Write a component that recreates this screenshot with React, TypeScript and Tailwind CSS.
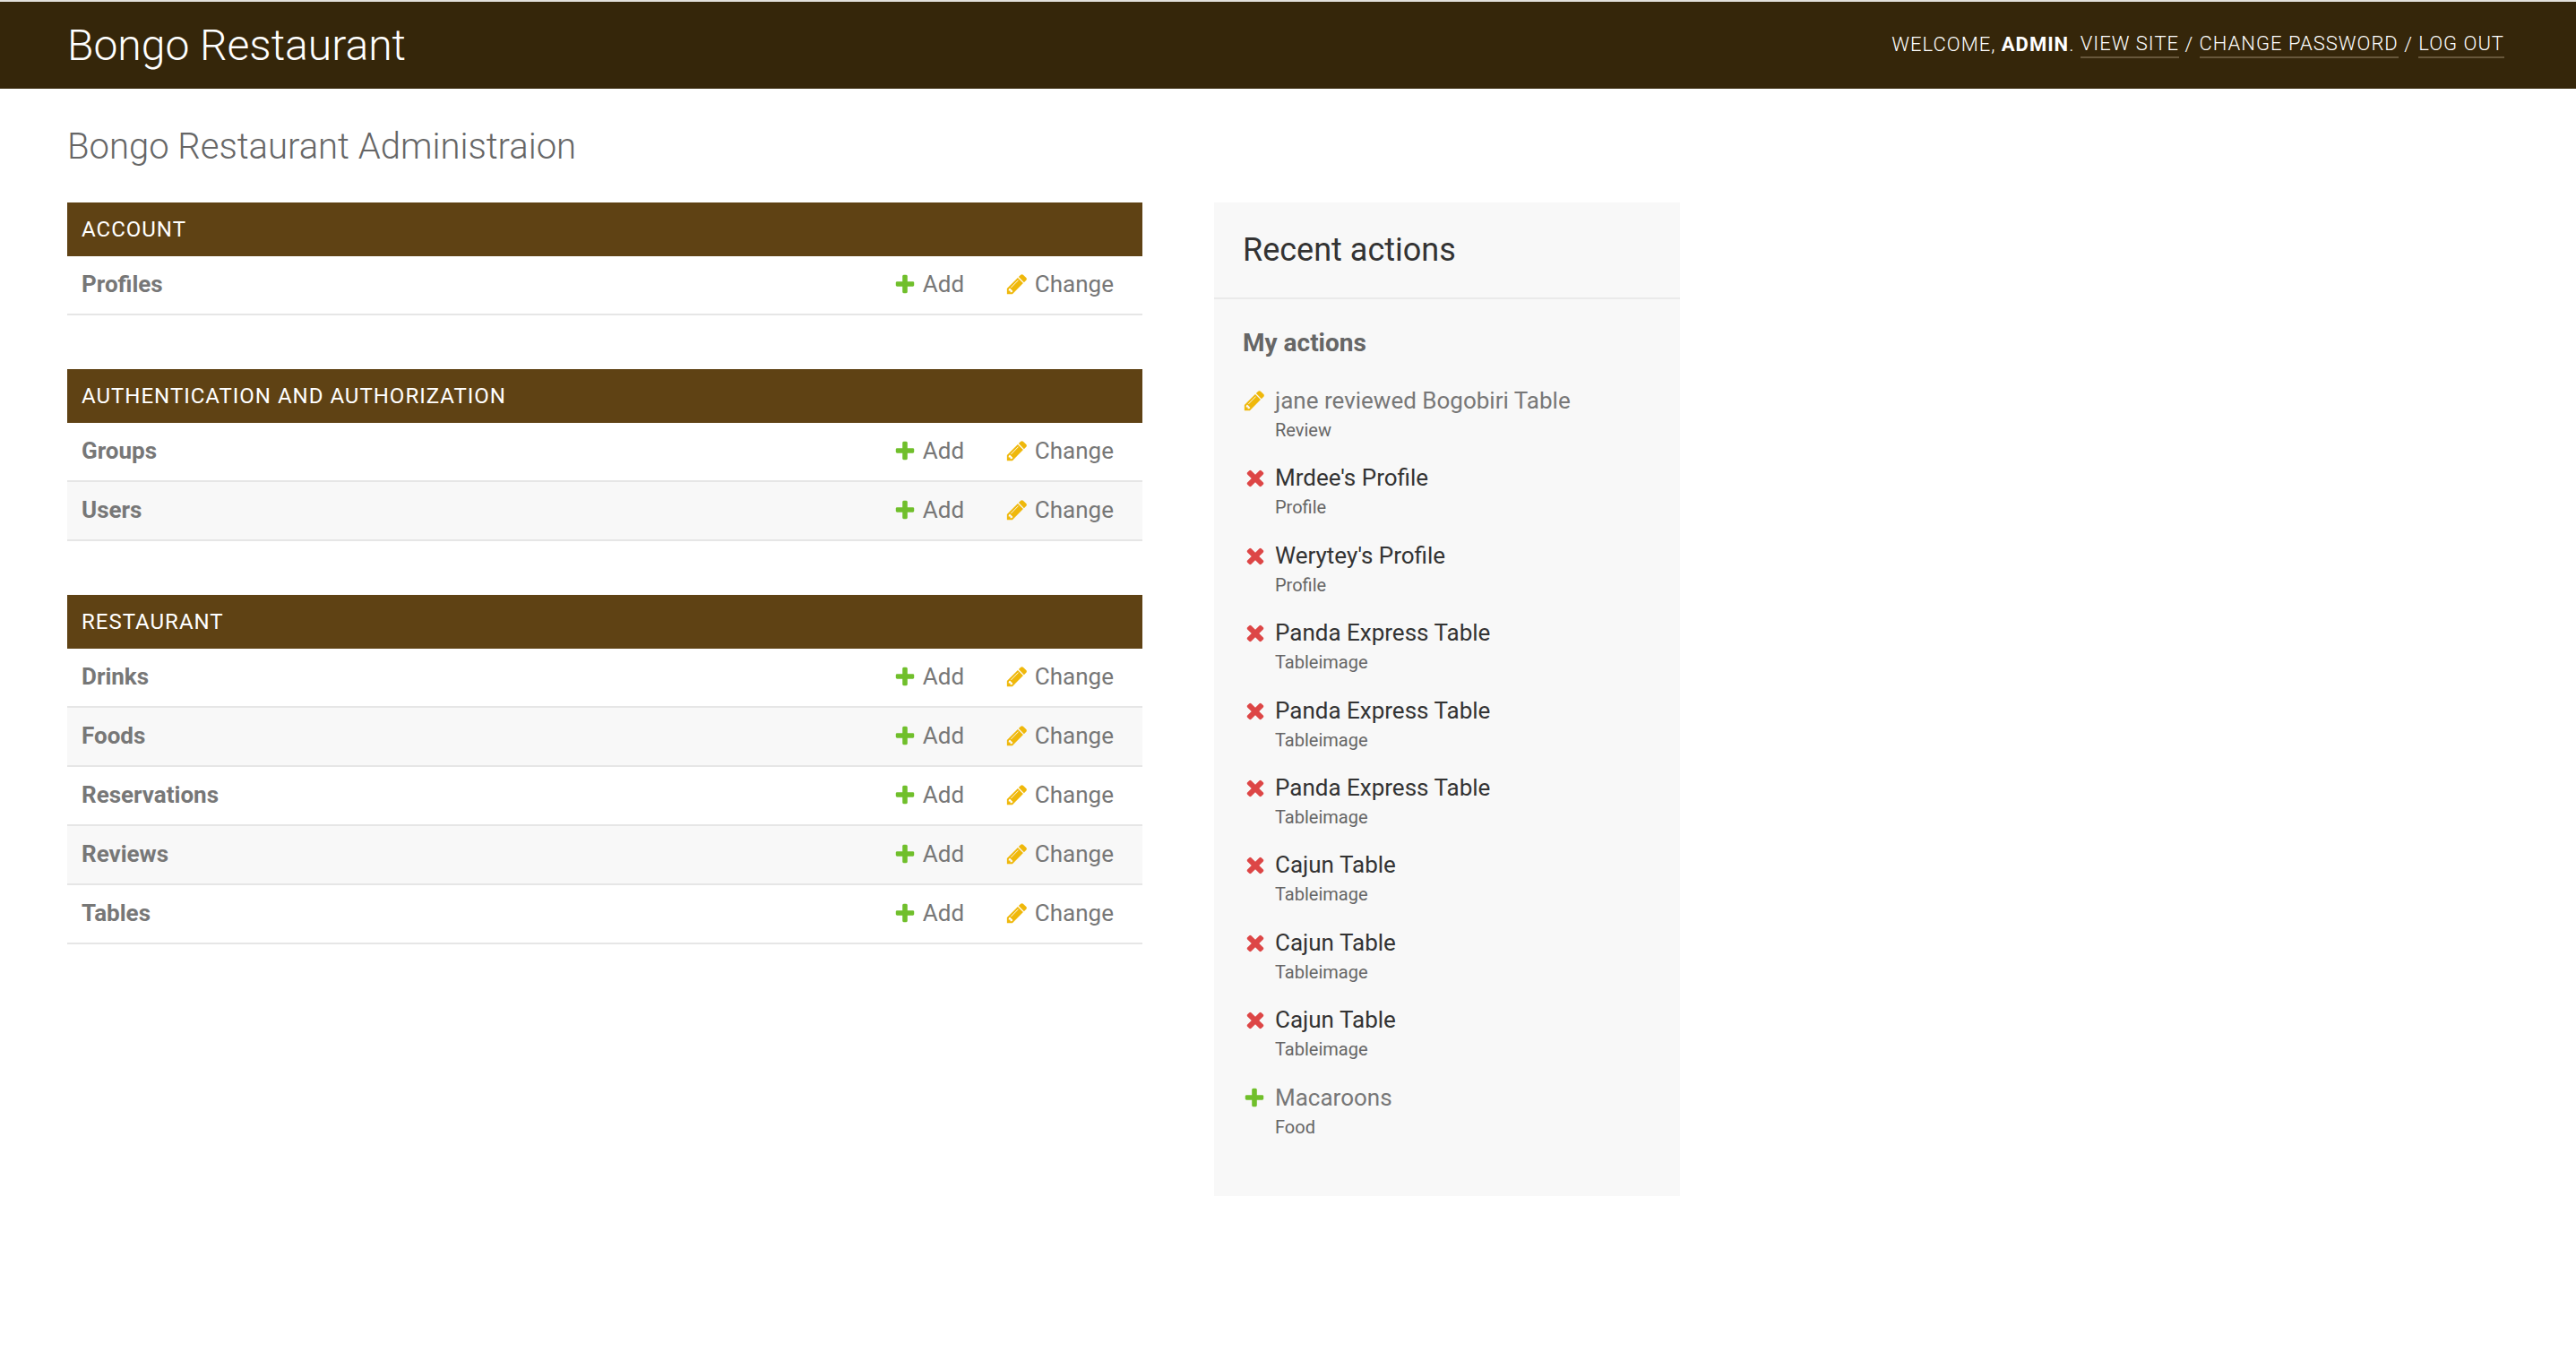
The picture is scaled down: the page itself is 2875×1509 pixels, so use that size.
import React from 'react';

const PENCIL = 'M491 1536l91-91-235-235-91 91v107h128v128h107zm523-928q0-22-22-22-10 0-17 7l-542 542q-7 7-7 17 0 22 22 22 10 0 17-7l542-542q7-7 7-17zm-54-192l416 416-832 832h-416v-416zm683 96q0 53-37 90l-166 166-416-416 166-165q36-38 90-38 53 0 91 38l235 234q37 39 37 91z';
const PLUS = 'M1600 796v192q0 40-28 68t-68 28h-416v416q0 40-28 68t-68 28h-192q-40 0-68-28t-28-68v-416h-416q-40 0-68-28t-28-68v-192q0-40 28-68t68-28h416v-416q0-40 28-68t68-28h192q40 0 68 28t28 68v416h416q40 0 68 28t28 68z';
const CROSS = 'M1490 1322q0 40-28 68l-136 136q-28 28-68 28t-68-28l-294-294-294 294q-28 28-68 28t-68-28l-136-136q-28-28-28-68t28-68l294-294-294-294q-28-28-28-68t28-68l136-136q28-28 68-28t68 28l294 294 294-294q28-28 68-28t68 28l136 136q28 28 28 68t-28 68l-294 294 294 294q28 28 28 68z';

const AddIcon = () => <svg viewBox="0 0 1792 1792" className="block size-[26px]" fill="#70bf2b"><path d={PLUS} /></svg>;
const ChangeIcon = () => <svg viewBox="0 0 1792 1792" className="block size-[26px]" fill="#efb80b"><path d={PENCIL} /></svg>;
const DeleteIcon = () => <svg viewBox="0 0 1792 1792" className="block size-[28px]" fill="#dd4646"><path d={CROSS} /></svg>;

const modules = [
    { name: 'Account', models: ['Profiles'] },
    { name: 'Authentication and Authorization', models: ['Groups', 'Users'] },
    { name: 'Restaurant', models: ['Drinks', 'Foods', 'Reservations', 'Reviews', 'Tables'] },
];

const actions = [
    { kind: 'change', title: 'jane reviewed Bogobiri Table', type: 'Review' },
    { kind: 'delete', title: "Mrdee's Profile", type: 'Profile' },
    { kind: 'delete', title: "Werytey's Profile", type: 'Profile' },
    { kind: 'delete', title: 'Panda Express Table', type: 'Tableimage' },
    { kind: 'delete', title: 'Panda Express Table', type: 'Tableimage' },
    { kind: 'delete', title: 'Panda Express Table', type: 'Tableimage' },
    { kind: 'delete', title: 'Cajun Table', type: 'Tableimage' },
    { kind: 'delete', title: 'Cajun Table', type: 'Tableimage' },
    { kind: 'delete', title: 'Cajun Table', type: 'Tableimage' },
    { kind: 'add', title: 'Macaroons', type: 'Food' },
];

export default function App() {
    return (
        <div className="min-h-[1509px] bg-white font-['Roboto',sans-serif] text-[26px] text-[#333]">
            <header className="h-[99px] border-t-2 border-[#e2e0dc] bg-[#35260a] pl-[75px] pr-[80px] flex items-center justify-between">
                <h1 className="text-[48px] font-light text-white">Bongo Restaurant</h1>
                <div className="pb-[2px] text-[22px] font-light uppercase tracking-[1px] text-white flex items-center">
                    <span className="whitespace-pre">Welcome, <strong className="font-bold">Admin</strong>. </span>
                    <a className="border-b-2 border-[#67573b] leading-[28px]">View site</a>
                    <span className="whitespace-pre"> / </span>
                    <a className="border-b-2 border-[#67573b] leading-[28px]">Change password</a>
                    <span className="whitespace-pre"> / </span>
                    <a className="border-b-2 border-[#67573b] leading-[28px]">Log out</a>
                </div>
            </header>

            <main className="pl-[75px] pt-[39px]">
                <h2 className="h-[52px] text-[40px] leading-[52px] font-light text-[#666]">Bongo Restaurant Administraion</h2>

                <div className="mt-[36px] flex items-start gap-[80px]">
                    <div className="w-[1200px] flex flex-col gap-[60px]">
                        {modules.map((m) => (
                            <section key={m.name}>
                                <div className="h-[60px] bg-[#5f4214] px-[16px] flex items-center text-[24px] uppercase tracking-[1px] text-white">
                                    {m.name}
                                </div>
                                {m.models.map((model, i) => (
                                    <div key={model} className={`h-[66px] border-b-2 border-[#e6e6e6] pl-[16px] pr-[32px] pb-[2px] flex items-center ${i % 2 === 1 ? 'bg-[#f8f8f8]' : 'bg-white'}`}>
                                        <span className="font-bold text-[#777] flex-1">{model}</span>
                                        <span className="w-[76px] flex items-center text-[#777]"><span className="w-[33px] shrink-0"><AddIcon /></span>Add</span>
                                        <span className="ml-[49px] flex items-center text-[#777]"><span className="w-[33px] shrink-0"><ChangeIcon /></span>Change</span>
                                    </div>
                                ))}
                            </section>
                        ))}
                    </div>

                    <aside className="w-[520px] h-[1109px] bg-[#f8f8f8]">
                        <h2 className="h-[108px] border-b-2 border-[#eaeaea] px-[32px] flex items-center text-[36px] text-[#333]">Recent actions</h2>
                        <div className="px-[32px] pt-[31px]">
                            <h3 className="h-[36px] leading-[36px] text-[28px] font-bold text-[#666]">My actions</h3>
                            <ul className="mt-[28px] flex flex-col gap-[20.4px]">
                                {actions.map((a, i) => (
                                    <li key={i} className="h-[66px] flex">
                                        <div className="h-[36px] w-[36px] shrink-0 flex items-center">
                                            {a.kind === 'add' ? <AddIcon /> : a.kind === 'change' ? <ChangeIcon /> : <DeleteIcon />}
                                        </div>
                                        <div>
                                            <div className={`h-[36px] leading-[36px] ${a.kind === 'delete' ? 'text-[#333]' : 'text-[#777]'}`}>{a.title}</div>
                                            <div className="h-[30px] leading-[30px] text-[20px] text-[#666]">{a.type}</div>
                                        </div>
                                    </li>
                                ))}
                            </ul>
                        </div>
                    </aside>
                </div>
            </main>
        </div>
    );
}
